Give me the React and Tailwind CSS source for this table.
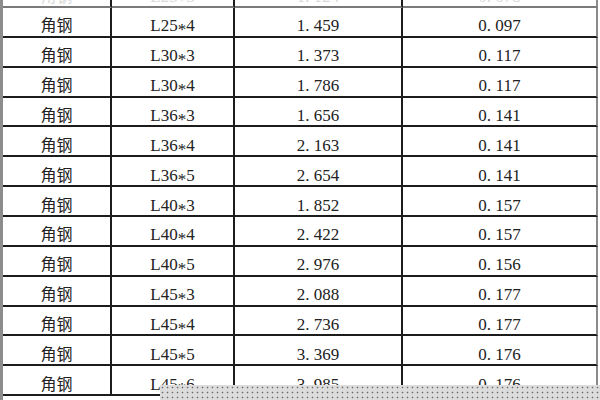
import React from 'react';

const rows = [
  ['L25*4', '1.459', '0.097'],
  ['L30*3', '1.373', '0.117'],
  ['L30*4', '1.786', '0.117'],
  ['L36*3', '1.656', '0.141'],
  ['L36*4', '2.163', '0.141'],
  ['L36*5', '2.654', '0.141'],
  ['L40*3', '1.852', '0.157'],
  ['L40*4', '2.422', '0.157'],
  ['L40*5', '2.976', '0.156'],
  ['L45*3', '2.088', '0.177'],
  ['L45*4', '2.736', '0.177'],
  ['L45*5', '3.369', '0.176'],
  ['L45*6', '3.985', '0.176'],
];

// SimSun-style half width period
function Num({ value }) {
  const [a, b] = value.split('.');
  return (
    <span>
      {a}
      <span className="inline-block w-[0.5em] text-left">.</span>
      {b}
    </span>
  );
}

function Spec({ value }) {
  const [a, b] = value.split('*');
  return (
    <span>
      {a}
      <span className="relative top-[4px]">*</span>
      {b}
    </span>
  );
}

function Row({ spec, weight, area, faded, top }) {
  const line = top ? 'border-[#7a7a7a]' : 'border-[#1c1c1c]';
  const color = faded ? 'text-[#dadada]' : 'text-[#222]';
  const cell = `flex items-center justify-center pt-[8px] border-b-2 ${line}`;
  return (
    <div className={`grid grid-cols-[109px_123px_168px_195px] h-[29.87px] ${color} ${top ? 'mt-[-21.87px]' : ''}`}>
      <div
        className={`flex items-center justify-center pt-[5px] border-b-2 ${line} border-r-2 border-r-[#1c1c1c] text-[16px]`}
        style={{ fontFamily: '"Noto Sans CJK SC", serif' }}
      >
        角钢
      </div>
      <div className={`${cell} border-r-2 border-r-[#1c1c1c]`}>
        <Spec value={spec} />
      </div>
      <div className={`${cell} border-r-2 border-r-[#1c1c1c]`}>
        <Num value={weight} />
      </div>
      <div className={`${cell} border-r-2 border-r-[#8a8a8a]`}>
        <Num value={area} />
      </div>
    </div>
  );
}

export default function App() {
  return (
    <div className="relative w-[600px] h-[400px] overflow-hidden bg-white flex">
      <div className="w-[3px] shrink-0 bg-[#8c8c8c]" />
      <div className="flex flex-col text-[17px] leading-none" style={{ fontFamily: '"Liberation Serif", "Noto Sans CJK SC", serif' }}>
        <Row spec="L25*3" weight="1.124" area="0.078" faded top />
        {rows.map((r, i) => (
          <Row key={i} spec={r[0]} weight={r[1]} area={r[2]} />
        ))}
      </div>
      <div className="absolute left-[160px] top-[385px] right-0 bottom-0 bg-[#dcdcdc] bg-[image:radial-gradient(circle,#6a6a6a_0.7px,transparent_1.1px)] bg-[length:5px_5px]" />
    </div>
  );
}
